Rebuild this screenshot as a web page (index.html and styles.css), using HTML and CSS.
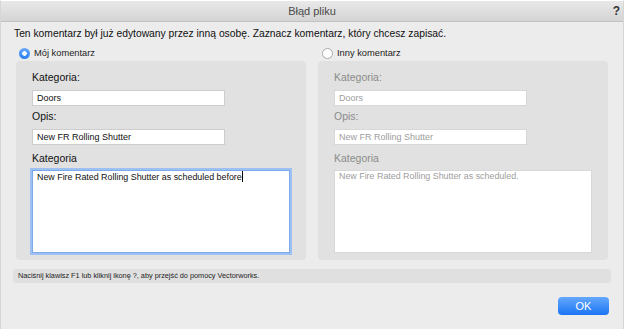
FILE: index.html
```html
<!DOCTYPE html>
<html lang="pl">
<head>
    <meta charset="UTF-8">
    <title>Błąd pliku</title>
    <link rel="stylesheet" href="styles.css">
</head>
<body>
    <div class="window">
        <header class="titlebar">
            <span></span>
            <span class="title">Błąd pliku</span>
            <span class="help-icon">?</span>
        </header>

        <p class="message">Ten komentarz był już edytowany przez inną osobę. Zaznacz komentarz, który chcesz zapisać.</p>

        <div class="columns">
            <!-- Mój komentarz -->
            <section class="column">
                <label class="radio-row">
                    <span class="radio checked"></span>
                    <span>Mój komentarz</span>
                </label>
                <div class="panel">
                    <div class="field-label first">Kategoria:</div>
                    <div class="input">Doors</div>
                    <div class="field-label">Opis:</div>
                    <div class="input">New FR Rolling Shutter</div>
                    <div class="field-label area-label">Kategoria</div>
                    <div class="textbox focused">New Fire Rated Rolling Shutter as scheduled before<span class="caret"></span></div>
                </div>
            </section>

            <!-- Inny komentarz -->
            <section class="column disabled">
                <label class="radio-row other">
                    <span class="radio"></span>
                    <span>Inny komentarz</span>
                </label>
                <div class="panel">
                    <div class="field-label first">Kategoria:</div>
                    <div class="input">Doors</div>
                    <div class="field-label">Opis:</div>
                    <div class="input">New FR Rolling Shutter</div>
                    <div class="field-label area-label">Kategoria</div>
                    <div class="textbox">New Fire Rated Rolling Shutter as scheduled.</div>
                </div>
            </section>
        </div>

        <div class="helpbar">Naciśnij klawisz F1 lub kliknij ikonę ?, aby przejść do pomocy Vectorworks.</div>

        <footer class="buttons">
            <button class="btn-ok">OK</button>
        </footer>
    </div>
</body>
</html>
```

FILE: styles.css
```css
/* Global */
body {
    margin: 0;
    background-color: #ffffff;
    font-family: 'Liberation Sans', Arial, sans-serif;
    color: #1a1a1a;
}

.window {
    width: 622px;
    height: 328px;
    background-color: #ececec;
    border-left: 1px solid #d6d6d6;
    border-right: 1px solid #d6d6d6;
    border-top: 1px solid #ffffff;
    overflow: hidden;
}

/* Title bar */
.titlebar {
    display: grid;
    grid-template-columns: 1fr auto 1fr;
    align-items: center;
    height: 20px;
    background: linear-gradient(#e9e9e9, #d4d4d4);
    border-bottom: 1px solid #c2c2c2;
    font-size: 11px;
    color: #4a4a4a;
}

.help-icon {
    justify-self: end;
    padding-right: 3px;
    font-weight: bold;
    font-size: 12px;
    color: #333;
}

.message {
    margin: 5px 0 0 13px;
    font-size: 10.3px;
    line-height: 14px;
    color: #111;
}

/* Columns */
.columns {
    display: grid;
    grid-template-columns: 290px 290px;
    column-gap: 12px;
    padding: 0 15px;
    margin-top: 5px;
}

.radio-row {
    display: flex;
    align-items: center;
    gap: 4px;
    height: 14px;
    margin: 0 0 1px 3px;
    font-size: 9.3px;
    color: #222;
}

.radio-row.other {
    margin-left: 4px;
}

.radio {
    box-sizing: border-box;
    width: 11px;
    height: 11px;
    border-radius: 50%;
    background: #ffffff;
    border: 1px solid #a9a9a9;
}

.radio.checked {
    border: none;
    background: radial-gradient(circle, #ffffff 0 2px, transparent 2.5px), linear-gradient(#66a9fb, #2a7ef2);
}

.panel {
    background-color: #e1e1e1;
    border-radius: 4px;
    padding: 9px 16px 7px;
}

.field-label {
    font-size: 10.5px;
    line-height: 14px;
    margin-top: 3px;
    color: #111;
}

.field-label.first {
    margin-top: 0;
}

.field-label.area-label {
    margin-top: 6px;
}

.input {
    box-sizing: border-box;
    width: 193px;
    height: 16px;
    margin-top: 6px;
    padding: 0 4px;
    background: #ffffff;
    border: 1px solid #cdcdcd;
    font-size: 9px;
    line-height: 14px;
    color: #111;
}

.textbox {
    box-sizing: border-box;
    width: 258px;
    height: 83px;
    margin-top: 5px;
    padding: 0 4px;
    background: #ffffff;
    border: 1px solid #cdcdcd;
    font-size: 8.9px;
    line-height: 11px;
    color: #111;
}

.textbox.focused {
    border-color: #7fa9e6;
    box-shadow: 0 0 0 2px #9dc1f2;
}

.caret {
    display: inline-block;
    width: 1px;
    height: 11px;
    background: #000;
    vertical-align: -2px;
}

/* Disabled column */
.disabled .field-label {
    color: #8c8c8c;
}

.disabled .input,
.disabled .textbox {
    color: #9d9d9d;
    border-color: #d8d8d8;
}

/* Help bar */
.helpbar {
    margin: 9px 12px 0 12px;
    height: 14px;
    line-height: 14px;
    padding-left: 5px;
    background-color: #e0e0e0;
    border-radius: 3px;
    font-size: 7.3px;
    color: #222;
}

/* Buttons */
.buttons {
    display: flex;
    justify-content: flex-end;
    padding: 14px 14px 0 0;
}

.btn-ok {
    width: 51px;
    height: 18px;
    border: none;
    border-radius: 4px;
    background: linear-gradient(#63a8fc, #1b74f4);
    color: #ffffff;
    font-family: 'Liberation Sans', Arial, sans-serif;
    font-size: 11px;
    padding: 0;
}
```
